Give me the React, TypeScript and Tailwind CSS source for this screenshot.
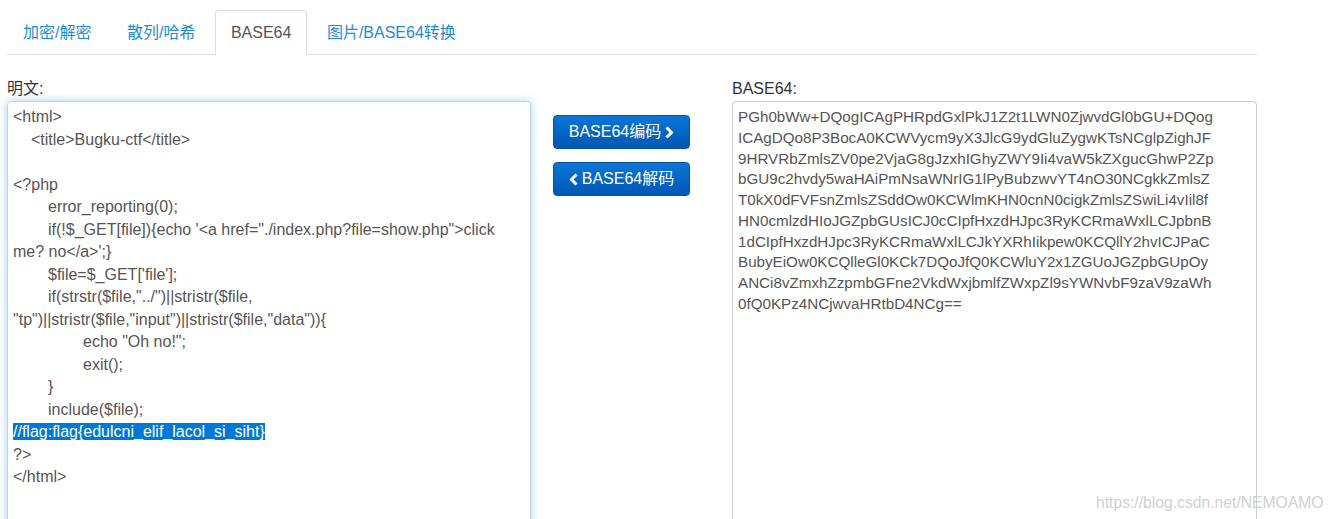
import { ReactNode } from "react";

const FONT = { fontFamily: '"Liberation Sans", Arial, "Noto Sans CJK SC", sans-serif' };

const TABS = ["加密/解密", "散列/哈希", "BASE64", "图片/BASE64转换"];

// indent: 0 none, 1 four spaces, 2 one tab, 3 two tabs, 4 selected line
const PLAIN_LINES: [number, string][] = [
  [0, "<html>"],
  [1, "<title>Bugku-ctf</title>"],
  [0, ""],
  [0, "<?php"],
  [2, "error_reporting(0);"],
  [2, "if(!$_GET[file]){echo '<a href=\"./index.php?file=show.php\">click"],
  [0, "me? no</a>';}"],
  [2, "$file=$_GET['file'];"],
  [2, "if(strstr($file,\"../\")||stristr($file,"],
  [0, "\"tp\")||stristr($file,\"input\")||stristr($file,\"data\")){"],
  [3, "echo \"Oh no!\";"],
  [3, "exit();"],
  [2, "}"],
  [2, "include($file);"],
  [4, "//flag:flag{edulcni_elif_lacol_si_siht}"],
  [0, "?>"],
  [0, "</html>"],
];

const BASE64_LINES = [
  "PGh0bWw+DQogICAgPHRpdGxlPkJ1Z2t1LWN0ZjwvdGl0bGU+DQog",
  "ICAgDQo8P3BocA0KCWVycm9yX3JlcG9ydGluZygwKTsNCglpZighJF",
  "9HRVRbZmlsZV0pe2VjaG8gJzxhIGhyZWY9Ii4vaW5kZXgucGhwP2Zp",
  "bGU9c2hvdy5waHAiPmNsaWNrIG1lPyBubzwvYT4nO30NCgkkZmlsZ",
  "T0kX0dFVFsnZmlsZSddOw0KCWlmKHN0cnN0cigkZmlsZSwiLi4vIil8f",
  "HN0cmlzdHIoJGZpbGUsICJ0cCIpfHxzdHJpc3RyKCRmaWxlLCJpbnB",
  "1dCIpfHxzdHJpc3RyKCRmaWxlLCJkYXRhIikpew0KCQllY2hvICJPaC",
  "BubyEiOw0KCQlleGl0KCk7DQoJfQ0KCWluY2x1ZGUoJGZpbGUpOy",
  "ANCi8vZmxhZzpmbGFne2VkdWxjbmlfZWxpZl9sYWNvbF9zaV9zaWh",
  "0fQ0KPz4NCjwvaHRtbD4NCg==",
];

function Chevron({ dir }: { dir: "left" | "right" }) {
  return (
    <svg width="10" height="13" viewBox="0 0 10 13" className="shrink-0">
      <path
        d={dir === "right" ? "M2.5 1.5 L7.5 6.5 L2.5 11.5" : "M7.5 1.5 L2.5 6.5 L7.5 11.5"}
        fill="none"
        stroke="white"
        strokeWidth="3"
        strokeLinejoin="miter"
      />
    </svg>
  );
}

function ActionButton({ children }: { children: ReactNode }) {
  return (
    <button className="flex h-[34px] w-[137px] items-center justify-center gap-[3px] rounded-[4px] border border-[#0452a8] bg-gradient-to-b from-[#0b76d8] to-[#0257b3] text-[16px] text-white">
      {children}
    </button>
  );
}

export default function App() {
  return (
    <div className="relative min-h-[519px] bg-white text-[#333]" style={FONT}>
      {/* Tabs */}
      <div className="ml-[7px] w-[1250px] pt-[10px]">
        <div className="flex border-b border-[#ddd]">
          {TABS.map((tab, i) => (
            <div
              key={tab}
              className={
                i === 2
                  ? "-mb-px mr-[3.5px] rounded-t-[4px] border border-[#ddd] border-b-white bg-white px-[15px] pb-[9px] pt-[11px] text-[16px] leading-[22px] text-[#555]"
                  : "mr-[3.5px] border border-transparent px-[15px] pb-[9px] pt-[11px] text-[16px] leading-[22px] text-[#1e8cd4]"
              }
            >
              {tab}
            </div>
          ))}
        </div>
      </div>

      {/* Panels */}
      <div className="ml-[7px] mt-[23px] flex">
        <div className="w-[524px] shrink-0">
          <div className="text-[16px] leading-[22px]">明文:</div>
          <div className="mt-px h-[430px] rounded-[4px] border border-[#c3d3e3] px-[5px] pt-[4px] text-[16px] leading-[22.5px] text-[#555] shadow-[0_0_8px_rgba(102,175,233,0.6)]">
            {PLAIN_LINES.map(([indent, text], i) => (
              <div key={i} className="h-[22.5px] whitespace-pre">
                {indent === 4 ? (
                  <span className="bg-[#0078d7] text-white">{text}</span>
                ) : (
                  <span
                    className={
                      indent === 1 ? "pl-[18px]" : indent === 2 ? "pl-[35px]" : indent === 3 ? "pl-[70px]" : ""
                    }
                  >
                    {text}
                  </span>
                )}
              </div>
            ))}
          </div>
        </div>

        <div className="w-[201px] shrink-0 pl-[22px] pt-[37px]">
          <div className="flex flex-col gap-[13px]">
            <ActionButton>
              <span>BASE64编码</span>
              <Chevron dir="right" />
            </ActionButton>
            <ActionButton>
              <Chevron dir="left" />
              <span>BASE64解码</span>
            </ActionButton>
          </div>
        </div>

        <div className="w-[525px] shrink-0">
          <div className="text-[16px] leading-[22px]">BASE64:</div>
          <div className="mt-px h-[430px] rounded-[4px] border border-[#ccc] px-[5px] pt-[5px] text-[15.2px] leading-[20.75px] text-[#555]">
            {BASE64_LINES.map((line) => (
              <div key={line} className="whitespace-pre">
                {line}
              </div>
            ))}
          </div>
        </div>
      </div>

      {/* Watermark */}
      <div className="absolute left-[1096px] top-[492px] text-[15.7px] leading-[22px] text-[#d0d0d0]">
        https://blog.csdn.net/NEMOAMO
      </div>
    </div>
  );
}
